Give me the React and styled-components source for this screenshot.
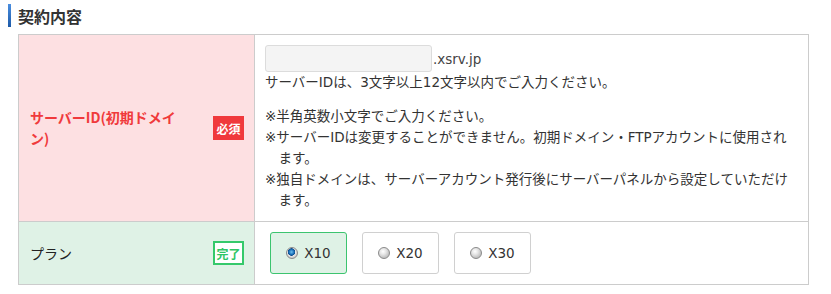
import React from 'react';
import styled, { createGlobalStyle } from 'styled-components';

const GlobalStyle = createGlobalStyle`
  html, body {
    margin: 0;
    padding: 0;
    background: #fff;
  }
  body {
    font-family: "DejaVu Sans", "Noto Sans CJK JP", sans-serif;
    color: #333;
  }
`;

const Page = styled.div`
  padding: 4px 22px 10px 8px;
`;

const Heading = styled.h2`
  display: flex;
  align-items: center;
  height: 23px;
  margin: 0 0 7px;
  font-family: "Noto Sans CJK JP", sans-serif;
  font-size: 16px;
  font-weight: 700;
  color: #333;

  &::before {
    content: '';
    display: block;
    width: 3px;
    height: 23px;
    margin-right: 7px;
    background: linear-gradient(#4a8ee0, #1d5aa8);
  }
`;

const Table = styled.div`
  margin-left: 10px;
  border: 1px solid #ccc;
  border-bottom: 0;
`;

const Row = styled.div`
  display: grid;
  grid-template-columns: 236px 1fr;
  border-bottom: 1px solid #ccc;
`;

const Label = styled.div`
  display: flex;
  align-items: center;
  padding: 0 10px 0 11px;
  border-right: 1px solid #ccc;
  background: ${(p) => (p.$required ? '#fde0e2' : '#dff2e6')};
`;

const LabelText = styled.div`
  flex: 1;
  margin-right: 22px;
  font-family: "Noto Sans CJK JP", sans-serif;
  font-size: 14px;
  line-height: 21px;
  font-weight: ${(p) => (p.$required ? 700 : 400)};
  color: ${(p) => (p.$required ? '#f03a3c' : '#222')};
`;

const Badge = styled.span`
  flex: none;
  box-sizing: border-box;
  width: 31px;
  height: 24px;
  display: flex;
  align-items: center;
  justify-content: center;
  font-family: "Noto Sans CJK JP", sans-serif;
  font-size: 12px;
  font-weight: 700;
  ${(p) =>
    p.$done
      ? 'background: #fff; color: #2fc565; border: 2px solid #35c96b;'
      : 'background: #f0393c; color: #fff;'}
`;

const Cell = styled.div`
  padding: ${(p) => (p.$plan ? '10px 15px' : '10px 15px 10px 10px')};
  font-size: 13.5px;
  line-height: 20px;
  color: #333;
`;

const InputRow = styled.div`
  display: flex;
  align-items: center;
`;

const TextInput = styled.input`
  box-sizing: border-box;
  width: 167px;
  height: 27px;
  margin: 0;
  padding: 0 6px;
  background: #f4f4f4;
  border: 1px solid #dcdcdc;
  border-radius: 3px;
  outline: none;
`;

const Suffix = styled.span`
  margin-left: 1px;
  color: #444;
`;

const Info = styled.p`
  margin: 0;
  line-height: 20px;
`;

const Notes = styled.ul`
  list-style: none;
  margin: 14px 0 0;
  padding: 0;
  line-height: 21px;
`;

const Note = styled.li`
  padding-left: 1em;
  text-indent: -1em;
`;

const Plans = styled.div`
  display: flex;
  gap: 15px;
`;

const PlanBox = styled.label`
  box-sizing: border-box;
  width: 77px;
  height: 42px;
  display: flex;
  align-items: center;
  justify-content: center;
  gap: 6px;
  border-radius: 3px;
  border: 1px solid ${(p) => (p.$checked ? '#3cc46f' : '#d0d0d0')};
  background: ${(p) => (p.$checked ? '#dff2e6' : '#fff')};
  font-size: 13.5px;
  color: #333;
`;

const Radio = styled.span`
  box-sizing: border-box;
  width: 12px;
  height: 12px;
  border-radius: 50%;
  border: 1px solid #8a8a8a;
  background: ${(p) =>
    p.$checked
      ? 'radial-gradient(circle at 45% 40%, #6ec0f0 0, #1a6fb8 2.5px, #0d4d8c 3.5px, #e8e8e8 4px, #c9c9c9 6px)'
      : 'radial-gradient(circle at 40% 35%, #ffffff 0, #e6e6e6 3px, #c4c4c4 6px)'};
`;

const plans = ['X10', 'X20', 'X30'];

export default function App() {
  return (
    <Page>
      <GlobalStyle />
      <Heading>契約内容</Heading>
      <Table>
        <Row>
          <Label $required>
            <LabelText $required>サーバーID(初期ドメイン)</LabelText>
            <Badge>必須</Badge>
          </Label>
          <Cell>
            <InputRow>
              <TextInput type="text" />
              <Suffix>.xsrv.jp</Suffix>
            </InputRow>
            <Info>サーバーIDは、3文字以上12文字以内でご入力ください。</Info>
            <Notes>
              <Note>※半角英数小文字でご入力ください。</Note>
              <Note>※サーバーIDは変更することができません。初期ドメイン・FTPアカウントに使用されます。</Note>
              <Note>※独自ドメインは、サーバーアカウント発行後にサーバーパネルから設定していただけます。</Note>
            </Notes>
          </Cell>
        </Row>
        <Row>
          <Label>
            <LabelText>プラン</LabelText>
            <Badge $done>完了</Badge>
          </Label>
          <Cell $plan>
            <Plans>
              {plans.map((name, i) => (
                <PlanBox key={name} $checked={i === 0}>
                  <Radio $checked={i === 0} />
                  {name}
                </PlanBox>
              ))}
            </Plans>
          </Cell>
        </Row>
      </Table>
    </Page>
  );
}
